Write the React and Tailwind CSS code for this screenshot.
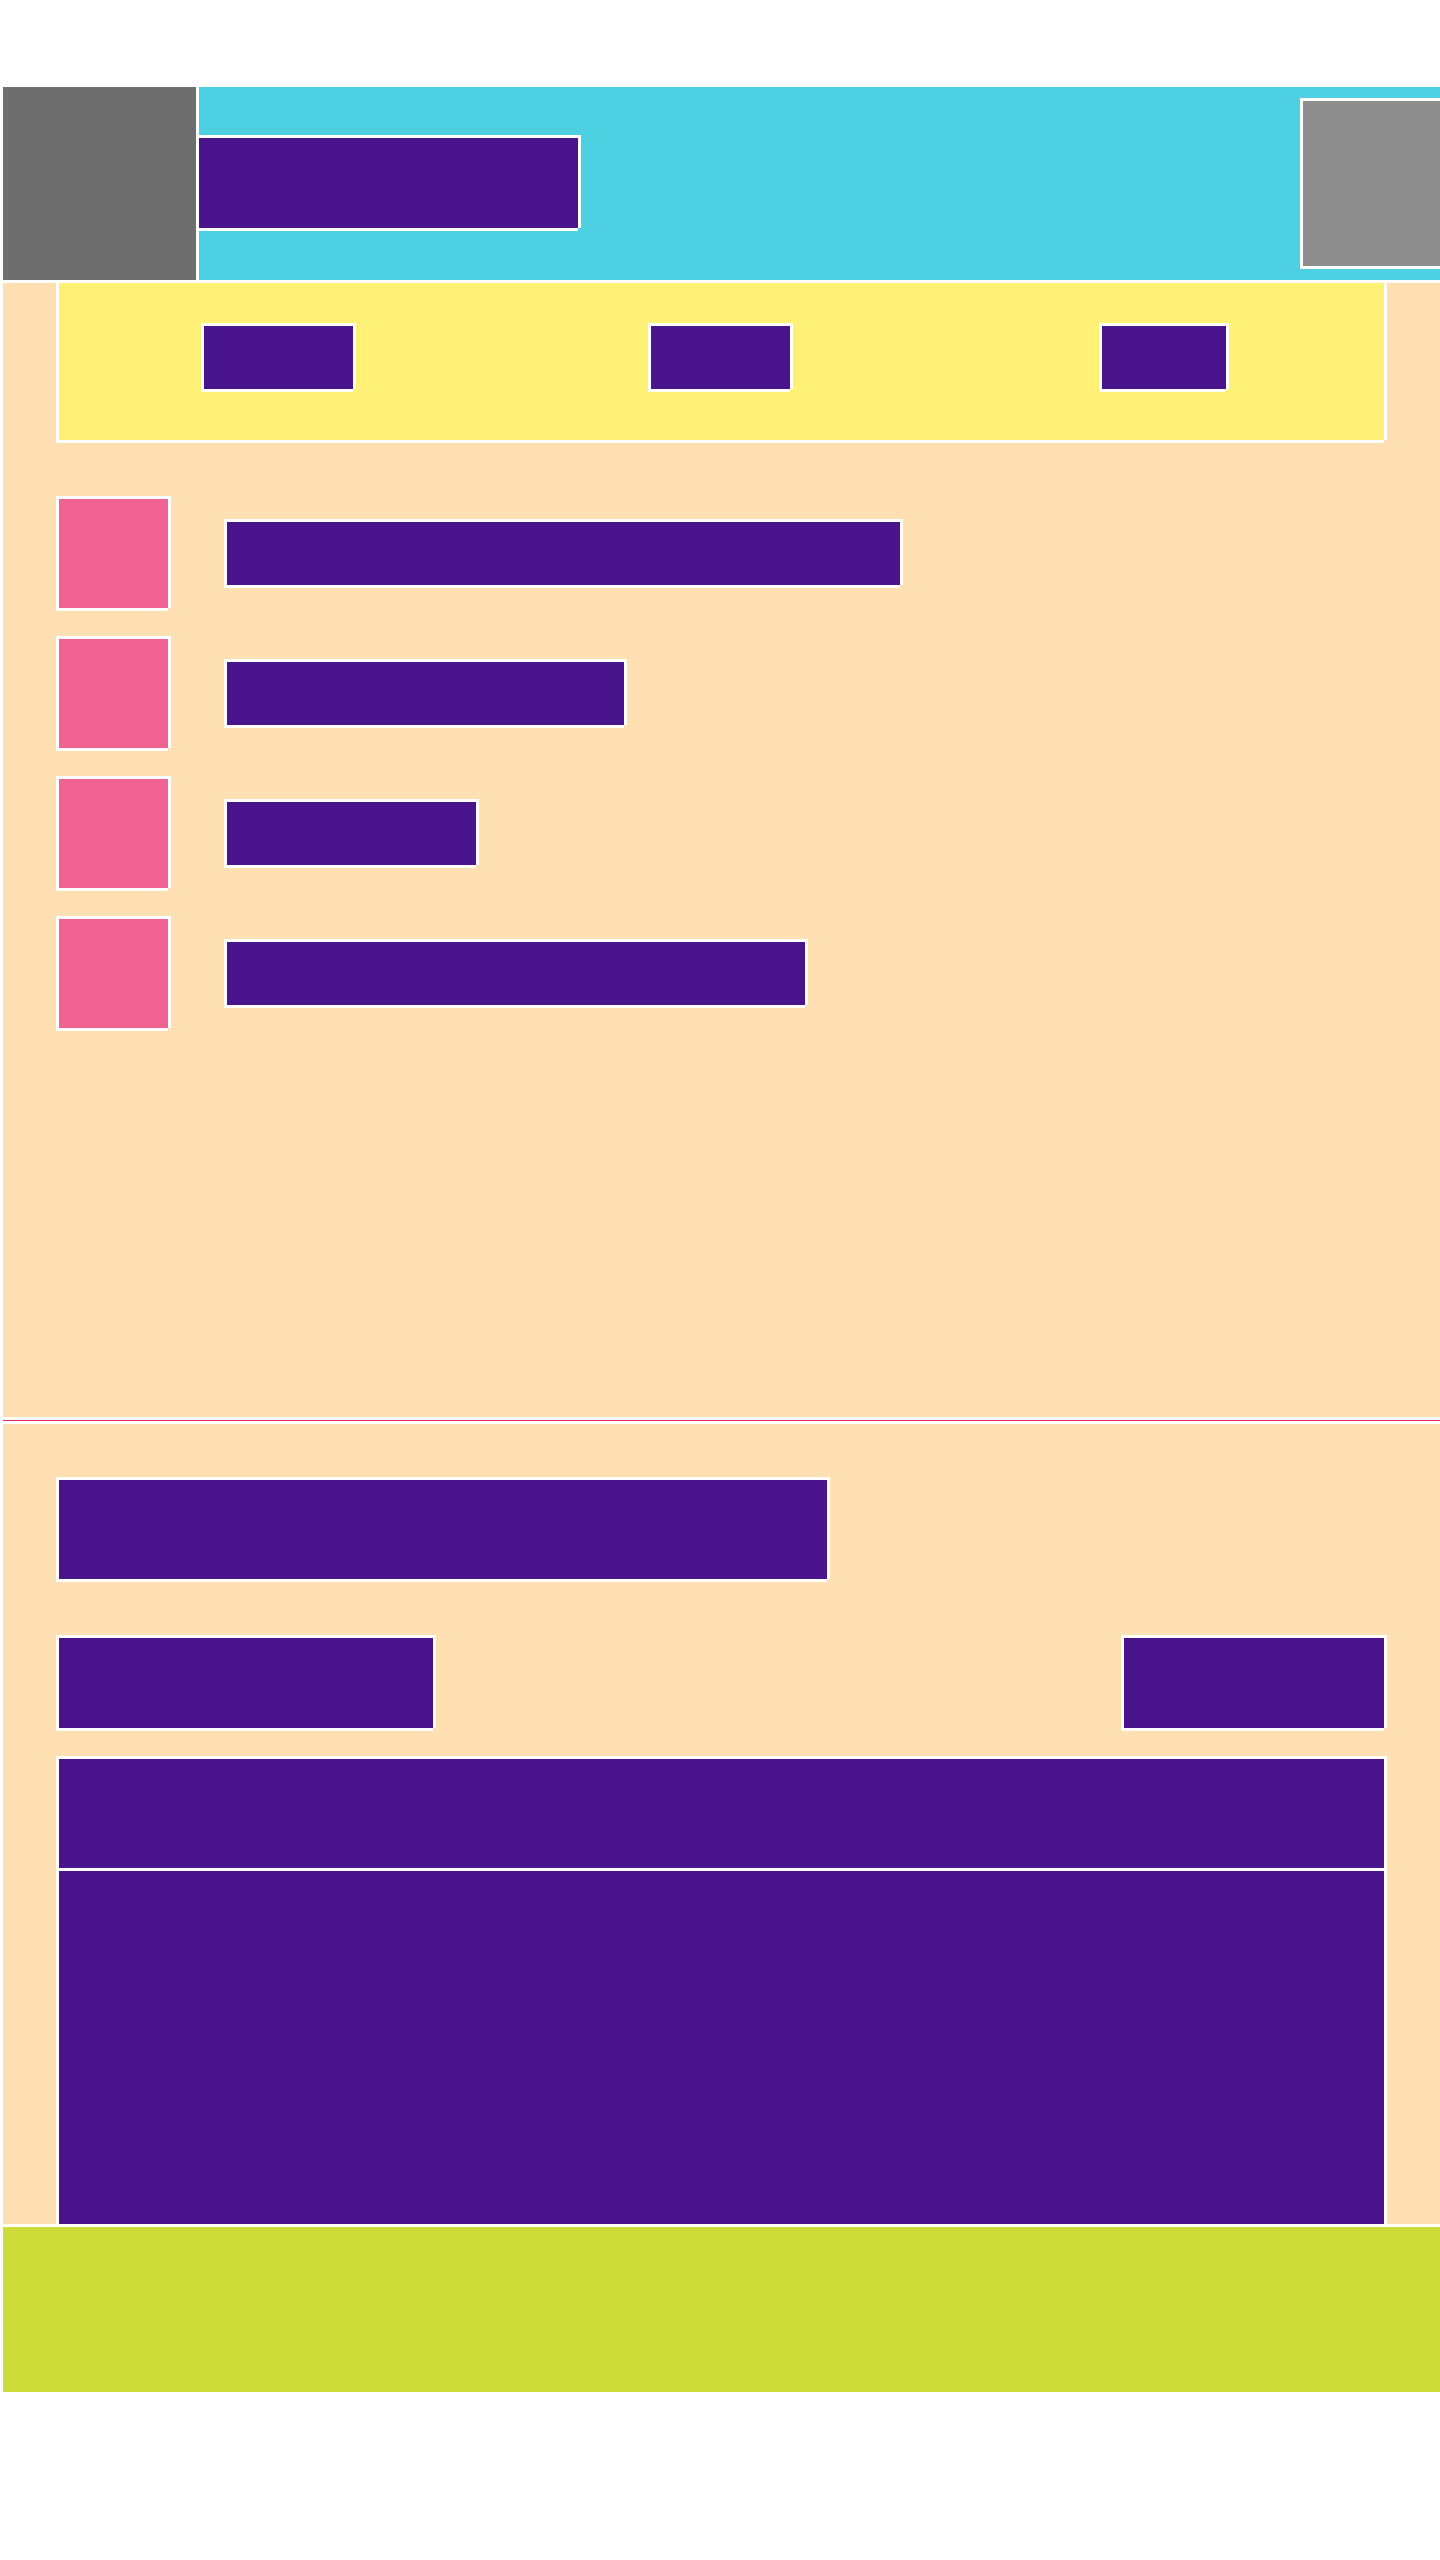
const box = "border-l-3 border-t-3 border-white shadow-[3px_0_0_#ffffff,0_3px_0_#ffffff]";
const purple = "bg-[#4A148C]";

function Row({ barClass }) {
  return (
    <div className="flex items-center gap-[56px]">
      <div className={`${box} w-[112px] h-[112px] bg-[#F06292] shrink-0`} />
      <div className={`${box} ${purple} h-[66px] ${barClass}`} />
    </div>
  );
}

export default function App() {
  return (
    <div className="w-[1440px] h-[2560px] bg-white pt-[87px] pl-[3px] overflow-hidden">
      <header className="flex h-[193px] bg-[#4DD0E1]">
        <div className="w-[196px] h-full bg-[#6E6E6E] border-r-3 border-white shrink-0" />
        <div className={`mt-[48px] w-[379px] h-[93px] border-t-3 border-white shadow-[3px_0_0_#ffffff,0_3px_0_#ffffff] ${purple}`} />
        <div className={`${box} ml-auto mt-[11px] w-[140px] h-[168px] bg-[#8E8E8E]`} />
      </header>

      <section className="h-[1134px] mt-[3px] bg-[#FFE0B2] pl-[53px]">
        <nav className={`flex w-[1328px] h-[157px] pl-[142px] pt-[40px] bg-[#FFF176] border-l-3 border-white shadow-[3px_0_0_#ffffff,0_3px_0_#ffffff]`}>
          <div className={`${box} ${purple} w-[152px] h-[66px]`} />
          <div className={`${box} ${purple} w-[142px] h-[66px] ml-[295px]`} />
          <div className={`${box} ${purple} w-[127px] h-[66px] ml-[309px]`} />
        </nav>
        <div className="flex flex-col gap-[28px] mt-[56px]">
          <Row barClass="w-[676px]" />
          <Row barClass="w-[400px]" />
          <Row barClass="w-[252px]" />
          <Row barClass="w-[581px]" />
        </div>
      </section>

      <div className="h-[7px] border-y-3 border-white bg-[#E91E63]" />

      <section className="h-[800px] bg-[#FFE0B2] pl-[53px] pt-[53px] flex flex-col">
        <div className={`${box} ${purple} w-[771px] h-[102px]`} />
        <div className="flex justify-between w-[1328px] mt-[56px]">
          <div className={`${box} ${purple} w-[377px] h-[93px]`} />
          <div className={`${box} ${purple} w-[263px] h-[93px]`} />
        </div>
        <div className={`${box} ${purple} w-[1328px] h-[112px] mt-[28px]`} />
        <div className={`${box} ${purple} w-[1328px] h-[356px]`} />
      </section>

      <footer className="h-[168px] border-t-3 border-white bg-[#CDDC39]" />
    </div>
  );
}
